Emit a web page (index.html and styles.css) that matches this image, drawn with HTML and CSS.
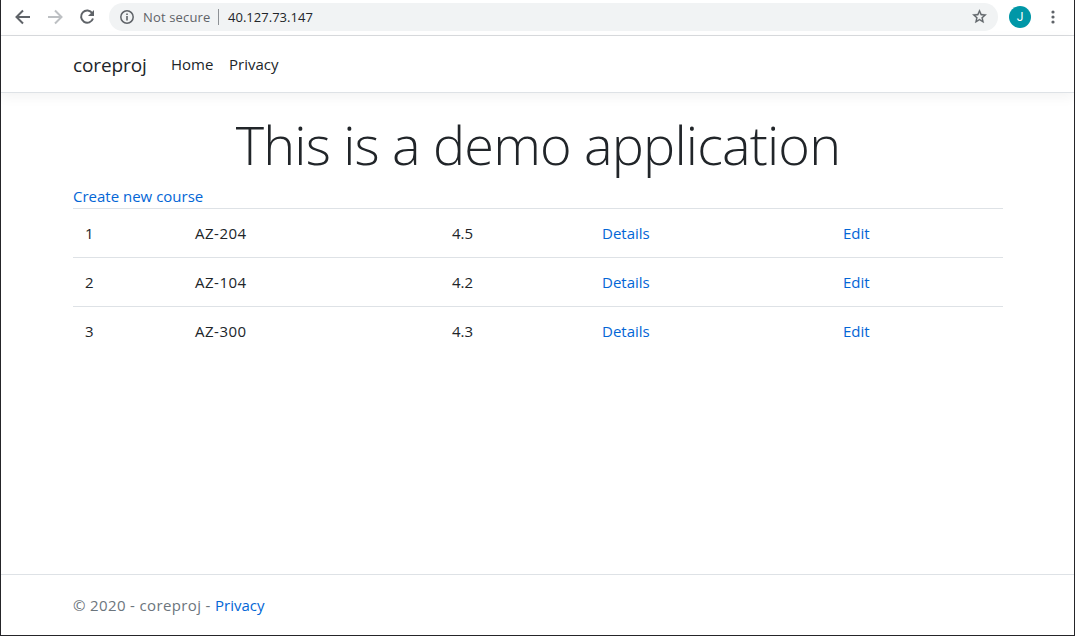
FILE: index.html
```html
<!DOCTYPE html>
<html lang="en">
<head>
<meta charset="utf-8">
<title>Home Page - coreproj</title>
<link rel="stylesheet" href="styles.css">
</head>
<body>
<div class="window">
  <div class="toolbar">
    <div class="nav-icons">
      <svg class="icon" viewBox="0 0 16 16"><path d="M15 8H2M8 1.5L1.5 8L8 14.5" fill="none" stroke="#5f6368" stroke-width="2"/></svg>
      <svg class="icon" viewBox="0 0 16 16"><path d="M1 8H14M8 1.5L14.5 8L8 14.5" fill="none" stroke="#bdc0c3" stroke-width="2"/></svg>
      <svg class="icon" viewBox="0 0 16 16"><path d="M13.3 4.3A6.1 6.1 0 1 0 14 9.5" fill="none" stroke="#5f6368" stroke-width="2"/><path d="M15 1V7H9Z" fill="#5f6368"/></svg>
    </div>
    <div class="address">
      <svg class="info" viewBox="0 0 14 14"><circle cx="7" cy="7" r="6.2" fill="none" stroke="#5f6368" stroke-width="1.5"/><path d="M7 6V10.5M7 3.4V5" stroke="#5f6368" stroke-width="1.6"/></svg>
      <span class="secure">Not secure</span>
      <span class="divider"></span>
      <span class="url">40.127.73.147</span>
      <svg class="star" viewBox="0 0 24 24"><path d="M22 9.24l-7.19-.62L12 2 9.19 8.63 2 9.24l5.46 4.73L5.82 21 12 17.27 18.18 21l-1.63-7.03L22 9.24zM12 15.4l-3.76 2.27 1-4.28-3.32-2.88 4.38-.38L12 6.1l1.71 4.04 4.38.38-3.32 2.88 1 4.28L12 15.4z" fill="#5f6368" stroke="#5f6368" stroke-width=".4"/></svg>
    </div>
    <span class="avatar">J</span>
    <svg class="more" viewBox="0 0 4 14"><circle cx="2" cy="2" r="1.6"/><circle cx="2" cy="7" r="1.6"/><circle cx="2" cy="12" r="1.6"/></svg>
  </div>
  <header class="navbar">
    <a class="brand">coreproj</a>
    <a class="nav-home">Home</a>
    <a class="nav-privacy">Privacy</a>
  </header>
  <main class="container">
    <h1 class="display">This is a demo application</h1>
    <div class="create"><a class="link">Create new course</a></div>
    <table class="table">
      <colgroup><col class="c-id"><col class="c-name"><col class="c-rating"><col class="c-details"><col></colgroup>
      <tbody>
        <tr><td>1</td><td><span class="code">AZ-204</span></td><td>4.5</td><td><a class="link">Details</a></td><td><a class="link">Edit</a></td></tr>
        <tr><td>2</td><td><span class="code">AZ-104</span></td><td>4.2</td><td><a class="link">Details</a></td><td><a class="link">Edit</a></td></tr>
        <tr><td>3</td><td><span class="code">AZ-300</span></td><td>4.3</td><td><a class="link">Details</a></td><td><a class="link">Edit</a></td></tr>
      </tbody>
    </table>
  </main>
  <footer class="footer"><span class="copyright">© 2020 - coreproj -&nbsp;</span><a class="link">Privacy</a></footer>
</div>
</body>
</html>
```
FILE: styles.css
```css
* { box-sizing: border-box; }
body {
  margin: 0;
  height: 637px;
  overflow: hidden;
  background: #fff;
  color: #212529;
  font: 370 15px/24px "Open Sans", "Noto Sans", sans-serif;
}
.window {
  display: flex;
  flex-direction: column;
  height: 636px;
  border: solid #252529;
  border-width: 0 1px 1px;
}
.toolbar {
  display: flex;
  flex: none;
  align-items: center;
  height: 36px;
  padding: 0 18px 2px 14px;
  border-bottom: 1px solid #d9dbde;
}
.nav-icons { display: flex; gap: 16px; }
.icon { width: 16px; height: 16px; }
.address {
  display: flex;
  align-items: center;
  width: 889px;
  height: 28px;
  margin-left: 14px;
  padding: 0 10px 0 11px;
  border-radius: 14px;
  background: #f1f3f4;
}
.info { width: 14px; height: 14px; margin-right: 9px; }
.secure { width: 75px; color: #5f6368; font-size: 13px; letter-spacing: .15px; white-space: nowrap; }
.divider { width: 1px; height: 16px; margin-right: 9px; background: #8d9195; }
.url { font-size: 13px; letter-spacing: .02px; }
.star { width: 17px; height: 17px; margin-left: auto; }
.avatar {
  width: 22px;
  height: 22px;
  margin: 0 auto 0 11px;
  border-radius: 50%;
  background: #0097a7;
  color: #fff;
  font: 12px/22px Roboto, sans-serif;
  text-align: center;
}
.more { width: 4px; height: 14px; margin-right: 1px; fill: #5f6368; }
.navbar {
  display: flex;
  flex: none;
  align-items: center;
  height: 57px;
  padding-left: 72px;
  border-bottom: 1px solid #dee2e6;
  box-shadow: 0 4px 12px rgba(0, 0, 0, .05);
}
.brand { width: 98px; padding-top: 2px; font-size: 19px; letter-spacing: -.1px; }
.nav-home { width: 58px; }
.container { flex: 1; padding: 20px 71px 0 72px; }
.display {
  margin: 0;
  font-size: 54px;
  font-weight: 300;
  line-height: 63px;
  letter-spacing: -.84px;
  text-align: center;
  white-space: nowrap;
}
.create { height: 32px; padding-top: 8px; }
.link { color: #0366d6; }
.table { width: 100%; border-collapse: collapse; table-layout: fixed; }
.table td { height: 49px; padding: 0 12px; border-top: 1px solid #dee2e6; }
.code { letter-spacing: .5px; }
.c-id { width: 110px; }
.c-name { width: 257px; }
.c-rating { width: 150px; }
.c-details { width: 241px; }
.footer {
  display: flex;
  flex: none;
  align-items: center;
  height: 61px;
  padding-left: 72px;
  border-top: 1px solid #dee2e6;
  color: #6c757d;
}
.copyright { letter-spacing: .36px; }
```
